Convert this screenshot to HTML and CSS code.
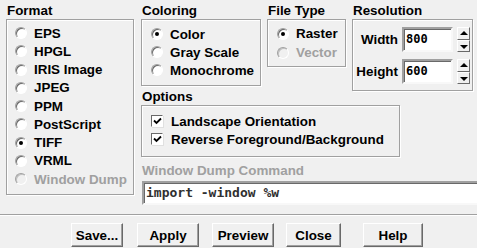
FILE: index.html
```
<!DOCTYPE html>
<html lang="en">
<head>
<meta charset="utf-8">
<title>Window Dump</title>
<link rel="stylesheet" href="styles.css">
</head>
<body>
<div class="dialog">
	<div class="panes">
		<div class="group format">
			<div class="group_title">Format</div>
			<div class="group_box list">
				<div class="radio"><span class="knob"></span>EPS</div>
				<div class="radio"><span class="knob"></span>HPGL</div>
				<div class="radio"><span class="knob"></span>IRIS Image</div>
				<div class="radio"><span class="knob"></span>JPEG</div>
				<div class="radio"><span class="knob"></span>PPM</div>
				<div class="radio"><span class="knob"></span>PostScript</div>
				<div class="radio on"><span class="knob"></span>TIFF</div>
				<div class="radio"><span class="knob"></span>VRML</div>
				<div class="radio off"><span class="knob"></span>Window Dump</div>
			</div>
		</div>

		<div class="right">
			<div class="top_row">
				<div class="group coloring">
					<div class="group_title">Coloring</div>
					<div class="group_box list">
						<div class="radio on"><span class="knob"></span>Color</div>
						<div class="radio"><span class="knob"></span>Gray Scale</div>
						<div class="radio"><span class="knob"></span>Monochrome</div>
					</div>
				</div>
				<div class="group filetype">
					<div class="group_title">File Type</div>
					<div class="group_box list tall">
						<div class="radio on"><span class="knob"></span>Raster</div>
						<div class="radio off"><span class="knob"></span>Vector</div>
					</div>
				</div>
				<div class="group resolution">
					<div class="group_title">Resolution</div>
					<div class="group_box res_box">
						<div class="res_row">
							<span class="res_label">Width</span>
							<span class="entry small">800</span>
							<span class="spinner"><span class="spin up"></span><span class="spin down"></span></span>
						</div>
						<div class="res_row">
							<span class="res_label">Height</span>
							<span class="entry small">600</span>
							<span class="spinner"><span class="spin up"></span><span class="spin down"></span></span>
						</div>
					</div>
				</div>
			</div>

			<div class="group options">
				<div class="group_title">Options</div>
				<div class="group_box list">
					<div class="check"><span class="box"><svg width="9" height="9" viewBox="0 0 9 9"><path d="M1 3.5 L3.5 6 L8 1.5" fill="none" stroke="#000" stroke-width="1.8"/></svg></span>Landscape Orientation</div>
					<div class="check"><span class="box"><svg width="9" height="9" viewBox="0 0 9 9"><path d="M1 3.5 L3.5 6 L8 1.5" fill="none" stroke="#000" stroke-width="1.8"/></svg></span>Reverse Foreground/Background</div>
				</div>
			</div>

			<div class="command">
				<div class="group_title disabled">Window Dump Command</div>
				<div class="entry wide">import -window %w</div>
			</div>
		</div>
	</div>

	<div class="separator"></div>

	<div class="buttons">
		<button class="btn save">Save...</button>
		<button class="btn apply">Apply</button>
		<button class="btn preview">Preview</button>
		<button class="btn close">Close</button>
		<button class="btn help">Help</button>
	</div>
</div>
</body>
</html>
```

FILE: styles.css
```
	:root {
		--Face: #f0f0f0;
		--Shadow: #a0a0a0;
		--Dark: #696969;
		--Grey: #a0a0a0;
	}

	body {
		margin: 0;
		background: var(--Face);
		font-family: "Liberation Sans", Arial, sans-serif;
		font-weight: bold;
		font-size: 13.4px;
		color: #000;
		overflow: hidden;
	}

	.dialog {
		width: 477px;
		height: 248px;
		overflow: hidden;
	}

	.panes {
		display: flex;
		padding: 3px 0 0 6px;
		gap: 6px;
	}

	.group_title {
		height: 16px;
		line-height: 16px;
		padding-left: 1px;
		white-space: nowrap;
	}

	.group_title.disabled {
		color: var(--Grey);
	}

	.group_box {
		border: 1px solid var(--Shadow);
		box-shadow: 1px 1px 0 #fff, inset 1px 1px 0 #fff;
		margin-right: 1px;
	}

	.list {
		padding: 4px 0 5px 8px;
	}

	.format .group_box {
		width: 118px;
		height: 165px;
	}

	.radio, .check {
		display: flex;
		align-items: center;
		height: 18.25px;
		white-space: nowrap;
	}

	.radio .knob {
		position: relative;
		box-sizing: border-box;
		width: 12px;
		height: 12px;
		margin-right: 7px;
		border-radius: 50%;
		border: 1px solid;
		border-color: #a0a0a0 #fff #fff #a0a0a0;
		background: #fff;
		box-shadow: inset 1px 1px 0 #696969;
	}

	.radio.on .knob::after {
		content: "";
		position: absolute;
		left: 3px;
		top: 3px;
		width: 4px;
		height: 4px;
		border-radius: 50%;
		background: #000;
	}

	.radio.off {
		color: var(--Grey);
	}

	.radio.off .knob {
		background: var(--Face);
		box-shadow: inset 1px 1px 0 #c0c0c0;
	}

	.right {
		display: flex;
		flex-direction: column;
		flex: 1;
	}

	.top_row {
		display: flex;
		gap: 5px;
	}

	.coloring .group_box {
		width: 109px;
		height: 55px;
		padding-left: 9px;
		padding-top: 5px;
	}

	.coloring .radio {
		height: 18px;
	}

	.filetype .group_box {
		width: 68px;
		height: 37px;
		padding-left: 9px;
	}

	.filetype .radio {
		height: 19px;
	}

	.resolution .group_box {
		width: 121px;
		height: 72px;
	}

	.res_box {
		display: flex;
		flex-direction: column;
		gap: 7px;
		padding-top: 7px;
		box-sizing: border-box;
	}

	.res_row {
		display: flex;
		align-items: center;
		justify-content: flex-end;
		padding-right: 2px;
		height: 25px;
	}

	.res_label {
		margin-right: 4px;
	}

	.entry {
		box-sizing: border-box;
		background: #fff;
		border: 2px solid;
		border-color: #a0a0a0 #f8f8f8 #f8f8f8 #a0a0a0;
		box-shadow: inset 1px 1px 0 #696969;
		font-family: "DejaVu Sans Mono", "Liberation Mono", monospace;
		font-weight: bold;
		font-size: 12px;
		white-space: nowrap;
	}

	.entry.small {
		width: 51px;
		height: 25px;
		line-height: 21px;
		padding-left: 2px;
		margin-right: 4px;
	}

	.spinner {
		display: flex;
		flex-direction: column;
		width: 13px;
		height: 25px;
	}

	.spin {
		flex: 1;
		position: relative;
		box-sizing: border-box;
		border: 1px solid;
		border-color: #fff #696969 #696969 #fff;
		background: var(--Face);
	}

	.spin::after {
		content: "";
		position: absolute;
		left: 2px;
		top: 3px;
		border-left: 4px solid transparent;
		border-right: 4px solid transparent;
	}

	.spin.up::after {
		border-bottom: 4px solid #000;
	}

	.spin.down::after {
		top: 4px;
		border-top: 4px solid #000;
	}

	.options {
		margin-top: -2px;
	}

	.options .group_box {
		width: 248px;
		height: 39px;
		padding-top: 6px;
		padding-left: 9px;
		box-sizing: content-box;
	}

	.options .check {
		height: 18px;
	}

	.check .box {
		box-sizing: border-box;
		width: 12px;
		height: 12px;
		margin-right: 8px;
		display: flex;
		align-items: center;
		justify-content: center;
		background: #fff;
		border: 1px solid;
		border-color: #696969 #fff #fff #696969;
		box-shadow: 1px 1px 0 #e0e0e0;
	}

	.command {
		margin-top: 6px;
	}

	.command .group_title {
		margin-bottom: 2px;
	}

	.entry.wide {
		height: 24px;
		line-height: 20px;
		padding-left: 2px;
		margin-left: 1px;
		margin-right: -8px;
		color: #303030;
		font-size: 13px;
	}

	.separator {
		margin-top: 9px;
		height: 1px;
		background: var(--Shadow);
		border-bottom: 1px solid #fff;
	}

	.buttons {
		display: flex;
		padding: 7px 0 0 71px;
		gap: 14px;
	}

	.btn {
		height: 24px;
		padding: 0;
		background: var(--Face);
		border: 1px solid;
		border-color: #fff #696969 #696969 #fff;
		box-shadow: inset -1px -1px 0 #a0a0a0;
		font-family: "Liberation Sans", Arial, sans-serif;
		font-weight: bold;
		font-size: 13.4px;
		color: #000;
	}

	.save { width: 52px; }
	.apply { width: 62px; }
	.preview { width: 62px; margin-left: -1px; }
	.close { width: 55px; margin-left: -2px; }
	.help { width: 60px; margin-left: 8px; }
```
